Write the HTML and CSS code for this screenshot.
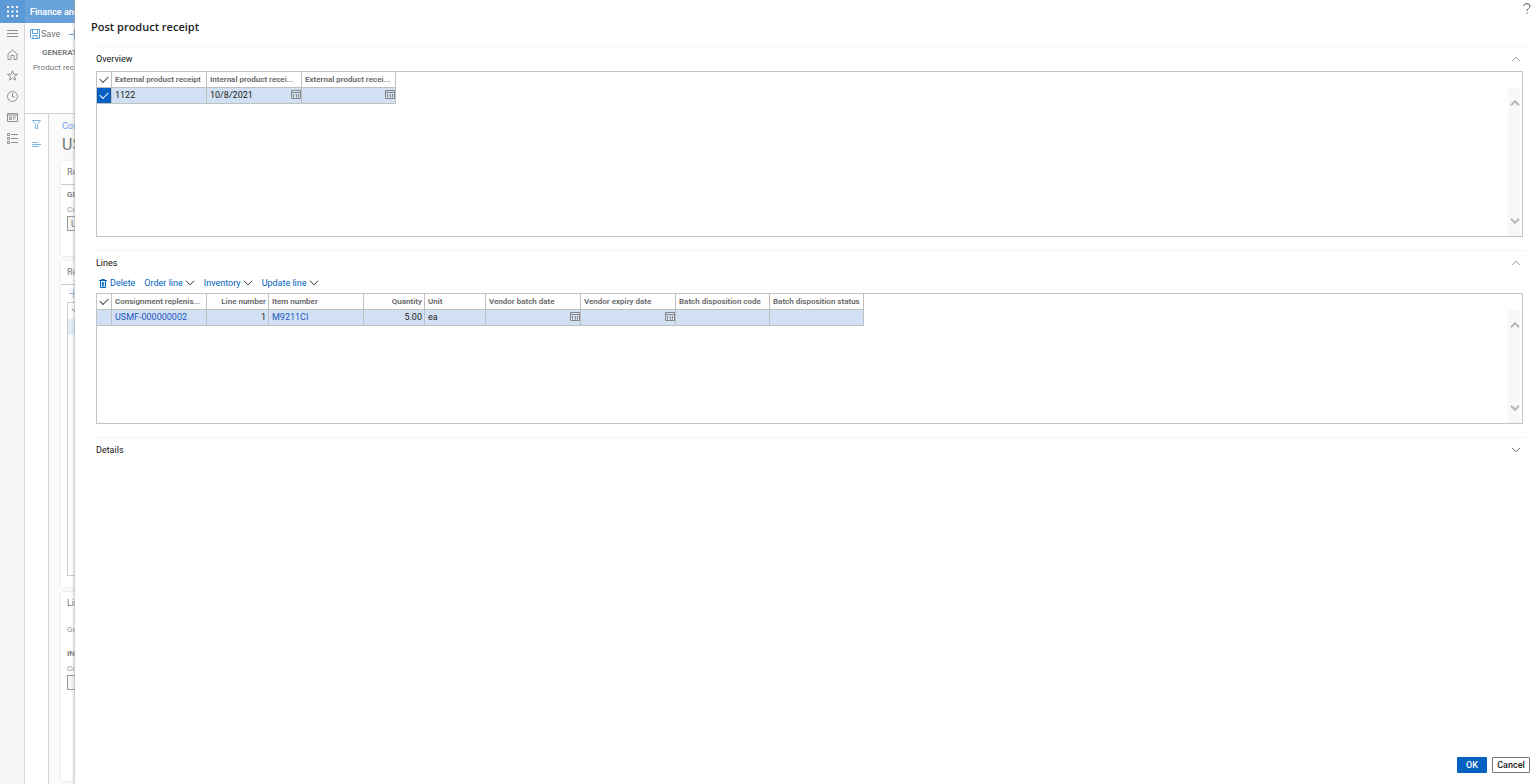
FILE: index.html
```html
<!DOCTYPE html>
<html lang="en">
<head>
<meta charset="utf-8">
<title>Post product receipt</title>
<link rel="stylesheet" href="styles.css">
</head>
<body>
<svg class="defs" aria-hidden="true">
  <symbol id="calendar" viewBox="0 0 10 9"><path d="M.5.500h9v8h-9zM.5 2.500h9M2.500 4v3.500M4.500 4.500h1v3M7.500 4v3.500" fill="none" stroke="currentColor"/></symbol>
  <symbol id="up" viewBox="0 0 10 6"><path d="M1 5.200l4-4 4 4"/></symbol>
  <symbol id="down" viewBox="0 0 10 6"><path d="M1 .8l4 4 4-4"/></symbol>
</svg>
<div class="app">
  <header class="topbar">
    <button class="waffle" aria-label="App launcher"><svg width="11" height="11" viewBox="0 0 11 11"><path d="M0 1h2M4.500 1h2M9 1h2M0 5.500h2M4.500 5.500h2M9 5.500h2M0 10h2M4.500 10h2M9 10h2" stroke="#fff" stroke-width="2"/></svg></button>
    <span class="brand">Finance and</span>
  </header>
  <nav class="rail">
    <button aria-label="Menu"><svg width="11" height="11" viewBox="0 0 11 11"><path d="M0 2.500h11M0 5.500h11M0 8.500h11"/></svg></button>
    <button aria-label="Home"><svg width="11" height="11" viewBox="0 0 11 11"><path d="M1 5l4.500-4L10 5v5.500H7v-4H4v4H1z"/></svg></button>
    <button aria-label="Favorites"><svg width="11" height="11" viewBox="0 0 11 11"><path d="M5.500.8l1.300 3.400 3.700.1-2.900 2.200 1 3.600-3.100-2-3.100 2 1-3.600L.5 4.300l3.700-.1z"/></svg></button>
    <button aria-label="Recent"><svg width="11" height="11" viewBox="0 0 11 11"><circle cx="5.500" cy="5.500" r="5"/><path d="M5.500 2v4H8"/></svg></button>
    <button aria-label="Workspaces"><svg width="11" height="11" viewBox="0 0 11 11"><path d="M.5 1.500h10v8H.5zM.5 3h10M2.500 5h2v2.500h-2zM6 5h3M6 7h2"/></svg></button>
    <button aria-label="Modules"><svg width="11" height="11" viewBox="0 0 11 11"><path d="M.5.500h2v2h-2zM.5 4.500h2v2h-2zM.5 8.500h2v2h-2zM4 1.500h7M4 5.500h7M4 9.500h7"/></svg></button>
  </nav>
  <div class="actions">
    <div class="commands">
      <button><svg width="10" height="10" viewBox="0 0 10 10"><path d="M.5.500h9v9h-8l-1-1zM2.500.500v4h5v-4M3 9.500v-3h4v3"/></svg>Save</button>
      <button class="new" aria-label="New"><svg width="10" height="10" viewBox="0 0 10 10"><path d="M0 5.500h10M5.500 0v10"/></svg></button>
    </div>
    <div class="group-title">GENERATE</div>
    <button class="group-item">Product receipt</button>
  </div>
  <div class="tools">
    <button aria-label="Filter"><svg width="9" height="9" viewBox="0 0 9 9"><path d="M.5.500h8l-3 4v4h-2v-4z"/></svg></button>
    <button aria-label="List"><svg width="9" height="7" viewBox="0 0 9 7"><path d="M0 1.500h6M0 3.500h9M0 5.500h7"/></svg></button>
  </div>
  <main class="page">
    <a class="crumb" href="#">Consignment</a>
    <h1 class="record">USMF</h1>
    <section class="card card-head">
      <h2 class="card-title ruled">Replenishment</h2>
      <h3 class="field-group">GENERAL</h3>
      <label class="field" for="order">Consignment</label>
      <input class="box" id="order" value="USMF">
    </section>
    <section class="card card-lines">
      <h2 class="card-title ruled">Replenish</h2>
      <button class="add" aria-label="Add line"><svg width="9" height="9" viewBox="0 0 9 9"><path d="M0 4.500h9M4.500 0v9"/></svg></button>
      <div class="mini-grid"><div class="mini-head"><svg width="10" height="6"><use href="#down"/></svg></div><div class="mini-row"></div></div>
    </section>
    <section class="card card-details">
      <h2 class="card-title">Line details</h2>
      <div class="tab">General</div>
      <h3 class="field-group">INVENTORY</h3>
      <label class="field" for="config">Configuration</label>
      <input class="box" id="config">
    </section>
  </main>
</div>

<div class="dialog" role="dialog" aria-labelledby="dialog-title">
  <header class="dialog-head">
    <h1 id="dialog-title">Post product receipt</h1>
    <button class="help" aria-label="Help"><svg width="8" height="11" viewBox="0 0 8 11"><path d="M1 3.200V2.500Q1.300.6 4 .6T7 3q0 1.300-1.500 2.300T4 8M4 9.500v1.300"/></svg></button>
  </header>
  <div class="dialog-body">
    <section class="section">
      <div class="section-head"><h2>Overview</h2><button aria-label="Collapse Overview"><svg width="10" height="6"><use href="#up"/></svg></button></div>
      <div class="grid grid-overview">
        <div class="grid-main">
          <table class="table-overview">
            <colgroup><col class="c-check"><col class="c-wide"><col class="c-wide"><col class="c-mid"></colgroup>
            <thead><tr><th><input type="checkbox" aria-label="Select all receipts"></th><th>External product receipt</th><th>Internal product recei...</th><th>External product recei...</th></tr></thead>
            <tbody><tr>
              <td><input type="checkbox" checked aria-label="Select receipt 1122"></td>
              <td><input class="cell" value="1122" aria-label="External product receipt"></td>
              <td><div class="date"><input class="cell" value="10/8/2021" aria-label="Internal product receipt date"><button aria-label="Pick date"><svg width="10" height="9"><use href="#calendar"/></svg></button></div></td>
              <td><div class="date"><input class="cell" aria-label="External product receipt date"><button aria-label="Pick date"><svg width="10" height="9"><use href="#calendar"/></svg></button></div></td>
            </tr></tbody>
          </table>
        </div>
        <div class="scroll"><svg width="10" height="6"><use href="#up"/></svg><svg width="10" height="6"><use href="#down"/></svg></div>
      </div>
    </section>
    <section class="section">
      <div class="section-head"><h2>Lines</h2><button aria-label="Collapse Lines"><svg width="10" height="6"><use href="#up"/></svg></button></div>
      <div class="toolbar">
        <button><svg width="8" height="9" viewBox="0 0 8 9"><path d="M0 1.500h8M2.500 1V.5h3V1M1.500 2v6.500h5V2M3.300 3v4.500M4.700 3v4.500"/></svg>Delete</button>
        <button>Order line<svg class="caret" width="10" height="6"><use href="#down"/></svg></button>
        <button>Inventory<svg class="caret" width="10" height="6"><use href="#down"/></svg></button>
        <button>Update line<svg class="caret" width="10" height="6"><use href="#down"/></svg></button>
      </div>
      <div class="grid grid-lines">
        <div class="grid-main">
          <table class="table-lines">
            <colgroup><col class="c-check"><col class="c-wide"><col class="c-line"><col class="c-wide"><col class="c-small"><col class="c-small"><col class="c-wide"><col class="c-wide"><col class="c-mid"><col class="c-mid"></colgroup>
            <thead><tr><th><input type="checkbox" aria-label="Select all lines"></th><th>Consignment replenis...</th><th class="num">Line number</th><th>Item number</th><th class="num">Quantity</th><th>Unit</th><th>Vendor batch date</th><th>Vendor expiry date</th><th>Batch disposition code</th><th>Batch disposition status</th></tr></thead>
            <tbody><tr>
              <td></td><td><a href="#">USMF-000000002</a></td><td class="num">1</td><td><a href="#">M9211CI</a></td><td class="num">5.00</td><td>ea</td>
              <td><div class="date"><input class="cell" aria-label="Vendor batch date"><button aria-label="Pick date"><svg width="10" height="9"><use href="#calendar"/></svg></button></div></td>
              <td><div class="date"><input class="cell" aria-label="Vendor expiry date"><button aria-label="Pick date"><svg width="10" height="9"><use href="#calendar"/></svg></button></div></td>
              <td></td><td></td>
            </tr></tbody>
          </table>
        </div>
        <div class="scroll"><svg width="10" height="6"><use href="#up"/></svg><svg width="10" height="6"><use href="#down"/></svg></div>
      </div>
    </section>
    <section class="section">
      <div class="section-head"><h2>Details</h2><button class="dark" aria-label="Expand Details"><svg width="10" height="6"><use href="#down"/></svg></button></div>
    </section>
  </div>
  <footer class="dialog-foot"><button class="ok">OK</button><button class="cancel">Cancel</button></footer>
</div>
</body>
</html>
```
FILE: styles.css
```css
* { box-sizing: border-box; }
html, body { height: 100%; }
body { margin: 0; overflow: hidden; position: relative; background: #fff; color: #222; font: 9px/12px Roboto, "Open Sans", sans-serif; }
h1, h2, h3 { margin: 0; font-size: 9px; line-height: 12px; font-weight: 400; }
button { padding: 0; border: 0; background: none; font: inherit; color: inherit; display: flex; align-items: center; white-space: nowrap; }
input { font: inherit; color: inherit; }
a { color: #1b55c4; text-decoration: none; }
svg { display: block; flex: none; fill: none; stroke: currentColor; }
.defs { position: absolute; width: 0; height: 0; }

/* Application behind the dialog */
.app { height: 100%; display: grid; grid-template: 23px 91px 1fr / 25px 24px 1fr; overflow: hidden; color: #777; }
.topbar { grid-column: 1 / -1; display: flex; align-items: center; background: #68a2da; color: #fff; }
.waffle { width: 25px; height: 23px; justify-content: center; background: #5c9ad7; }
.brand { padding-left: 5px; font-weight: 600; white-space: nowrap; }
.rail { grid-row: 2 / 4; display: flex; flex-direction: column; align-items: center; gap: 10px; padding-top: 5px; background: #f6f6f6; border-right: 1px solid #d5d5d5; color: #909090; }
.rail button { height: 11px; }
.actions { grid-column: 2 / 4; border-bottom: 1px solid #cfcfcf; padding: 5px; }
.commands { display: flex; gap: 9px; }
.commands button { gap: 1px; }
.commands svg { color: #5f9fdd; }
.group-title { padding: 8px 12px 0; font-size: 8px; line-height: 10px; font-weight: 600; }
.group-item { padding: 4px 3px; font-size: 8px; line-height: 12px; }
.tools { display: flex; flex-direction: column; align-items: center; gap: 12px; padding-top: 6px; border-right: 1px solid #d5d5d5; color: #80b2e4; }
.page { background: #fafafa; padding: 6px 0 0 12px; display: flex; flex-direction: column; }
.crumb { color: #6a9cf0; margin-left: 1px; }
.record { margin: 3px 1px 6px; font-size: 16px; line-height: 20px; }
.card { background: #fff; padding-left: 6px; margin-bottom: 5px; box-shadow: 0 0 2px #ddd; }
.card-head { height: 95px; }
.card-lines { height: 326px; display: flex; flex-direction: column; }
.card-details { flex: 1; margin-bottom: 3px; }
.card-title { padding: 5px 0 6px; }
.card-title.ruled { margin-left: -6px; padding-left: 6px; border-bottom: 1px solid #ccc; }
.field-group { padding-top: 4px; font-size: 8px; font-weight: 600; }
.field { display: block; padding-top: 3px; font-size: 8px; color: #999; }
.box { display: block; width: 100px; height: 15px; padding: 0 3px; border: 1px solid #999; background: #f7f7f7; }
.add { padding: 4px 2px; color: #8dbbe6; }
.mini-grid { flex: 1; margin-bottom: 11px; border: 1px solid #ccc; }
.mini-head { height: 16px; padding: 5px 3px; }
.mini-row { height: 16px; background: #e4edf8; }
.tab { padding: 9px 0 8px; font-size: 8px; line-height: 12px; color: #999; }

/* Dialog */
.dialog { position: absolute; inset: 0 0 0 75px; display: flex; flex-direction: column; background: #fff; box-shadow: 0 0 4px #999; }
.dialog-head { display: flex; justify-content: space-between; padding: 0 5px 0 16px; height: 46px; }
.dialog-head h1 { padding-top: 19px; font: 600 11px/16px "Open Sans", "Noto Sans", sans-serif; }
.help { height: 17px; color: #555; }
.dialog-body { flex: 1; padding: 0 9px 0 16px; }
.section { border-top: 1px solid #f5f5f5; padding: 0 4px 0 5px; margin-bottom: 13px; }
.section-head { display: flex; justify-content: space-between; align-items: center; height: 24px; color: #111; }
.section-head button { height: 20px; padding: 0 2px; color: #999; }
.section-head .dark { color: #666; }
.grid { display: flex; border: 1px solid #c4c4c4; }
.grid-overview { height: 166px; }
.grid-lines { height: 131px; }
.grid-main { flex: 1; min-width: 0; overflow: hidden; }
.scroll { width: 13px; margin: 16px 1px 0 0; padding: 12px 0; display: flex; flex-direction: column; justify-content: space-between; align-items: center; background: #f8f8f8; color: #b8b8b8; stroke-width: 2; }
table { table-layout: fixed; border-collapse: separate; border-spacing: 0; }
.table-overview { width: 299px; }
.table-lines { width: 767px; }
.c-check { width: 15px; }
.c-wide { width: 95px; }
.c-mid { width: 94px; }
.c-line { width: 62px; }
.c-small { width: 61px; }
th, td { height: 16px; padding: 0 0 0 3px; border: 0 solid #c0c0c0; border-width: 0 1px 1px 0; text-align: left; white-space: nowrap; line-height: 15px; }
th { font-size: 8px; font-weight: 600; color: #666; }
td { background: #d1e1f3; }
td .cell { display: block; width: 100%; min-width: 0; height: 15px; padding: 0; border: 0; background: none; }
th:first-child, td:first-child { padding: 0; }
.num { text-align: right; padding-right: 2px; }
.date { display: flex; align-items: flex-start; }
.date button { color: #858585; height: 13px; }
input[type="checkbox"] { appearance: none; display: grid; place-items: center; width: 100%; height: 15px; margin: 0; color: #444; }
input[type="checkbox"]::before { content: ""; width: 7px; height: 4px; margin-bottom: 3px; border: solid currentColor; border-width: 0 0 1px 1px; transform: rotate(-45deg); }
input[type="checkbox"]:checked { background: #0560c0; color: #fff; }
.toolbar { display: flex; align-items: center; gap: 9px; height: 18px; padding: 0 3px 2px; color: #0064bf; }
.toolbar button { gap: 3px; }
.toolbar .caret { margin-left: -1px; color: #333; }
.dialog-foot { display: flex; justify-content: flex-end; gap: 5px; padding: 0 6px 11px; }
.dialog-foot button { justify-content: center; height: 16px; border-radius: 1px; font-weight: 500; }
.ok { width: 30px; background: #0560c0; color: #fff; }
.cancel { width: 38px; border: 1px solid #777; }
```
